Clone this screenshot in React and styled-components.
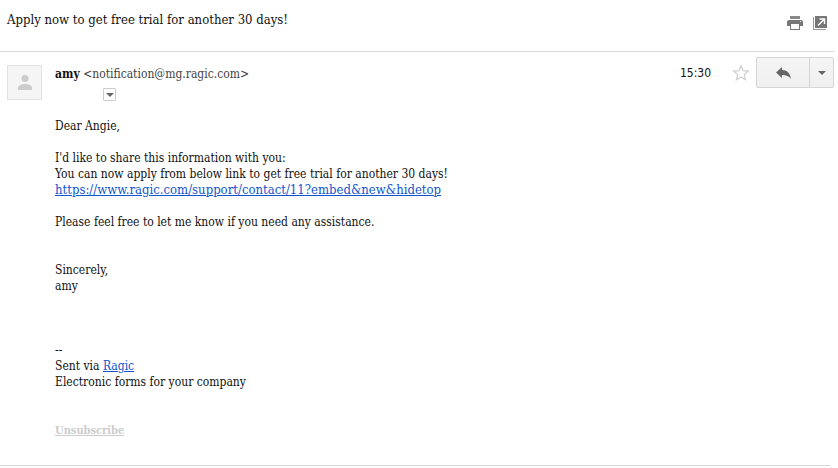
import React from "react";
import styled, { createGlobalStyle } from "styled-components";

const GlobalStyle = createGlobalStyle`
  body {
    margin: 0;
    background: #fff;
    color: #111;
    font-family: "DejaVu Serif Condensed", "DejaVu Serif", serif;
    font-size: 12px;
    line-height: 16px;
  }
`;

const Page = styled.main`
  padding-right: 4px;
`;

const SubjectBar = styled.header`
  display: flex;
  justify-content: space-between;
  align-items: flex-start;
  padding: 10px 7px 21px 7px;
  border-bottom: 1px solid #d8d8d8;
`;

const Subject = styled.h1`
  margin: 0;
  font-size: 13px;
  line-height: 20px;
  font-weight: 400;
`;

const Tools = styled.div`
  display: flex;
  gap: 10px;
  padding-top: 6px;
`;

const IconButton = styled.button`
  display: flex;
  padding: 0;
  border: 0;
  background: none;
  cursor: pointer;
`;

const Message = styled.article`
  display: flex;
  gap: 13px;
  padding: 5px 0 26px 7px;
`;

const Divider = styled.hr`
  margin: 0 4px 0 0;
  border: 0;
  border-top: 1px solid #d8d8d8;
`;

const Avatar = styled.div`
  box-sizing: border-box;
  flex: none;
  display: flex;
  align-items: center;
  justify-content: center;
  width: 35px;
  height: 35px;
  margin-top: 8px;
  border: 1px solid #e2e2e2;
  background: #f5f5f5;
`;

const Main = styled.div`
  flex: 1;
  min-width: 0;
`;

const MessageHeader = styled.div`
  display: flex;
  justify-content: space-between;
  align-items: flex-start;
`;

const Sender = styled.div`
  padding-top: 9px;
`;

const Name = styled.strong`
  font-weight: 700;
`;

const Address = styled.span`
  color: #444;
`;

const DetailsButton = styled.button`
  display: flex;
  align-items: center;
  justify-content: center;
  width: 13px;
  height: 13px;
  margin: 6px 0 0 48px;
  padding: 0;
  border: 1px solid #ccc;
  border-radius: 1px;
  box-sizing: border-box;
  background: #fff;
  cursor: pointer;
`;

const Actions = styled.div`
  display: flex;
  align-items: center;
`;

const Time = styled.time`
  margin-right: 21px;
  font-family: "DejaVu Sans Condensed", "DejaVu Sans", sans-serif;
`;

const ReplyGroup = styled.div`
  display: flex;
  margin-left: 6px;
`;

const ReplyButton = styled.button`
  box-sizing: border-box;
  display: flex;
  align-items: center;
  justify-content: center;
  width: ${props => props.$width}px;
  height: 31px;
  padding: 0;
  border: 1px solid #d6d6d6;
  border-radius: ${props => (props.$last ? "0 2px 2px 0" : "2px 0 0 2px")};
  margin-left: ${props => (props.$last ? "-1px" : "0")};
  background: linear-gradient(#f5f5f5, #f0f0f0);
  cursor: pointer;
`;

const Body = styled.div`
  padding-top: 17px;
`;

const Paragraph = styled.p`
  margin: 0 0 ${props => props.$after || 16}px;
`;

const Link = styled.a`
  color: #15c;
  font-size: ${props => (props.$large ? 13 : 12)}px;
  text-decoration: underline;
`;

const Unsubscribe = styled.a`
  color: #ccc;
  font-size: 11px;
  font-weight: 700;
  text-decoration: underline;
`;

const Caret = () => (
  <svg width="8" height="4" viewBox="0 0 8 4" aria-hidden="true">
    <path d="M0 0h8L4 4z" fill="#666" />
  </svg>
);

const PrintIcon = () => (
  <svg width="16" height="14" viewBox="0 0 16 14" aria-hidden="true">
    <path d="M3 0h10v3H3z" fill="#888" />
    <path d="M2 4h12a2 2 0 0 1 2 2v4h-3v4H3v-4H0V6a2 2 0 0 1 2-2z" fill="#777" />
    <path d="M4 8h8v5H4z" fill="#fff" />
    <path d="M13 5h1v1h-1z" fill="#ddd" />
  </svg>
);

const PopOutIcon = () => (
  <svg width="14" height="14" viewBox="0 0 14 14" aria-hidden="true">
    <path d="M0 1h1v12h12v1H0z" fill="#999" />
    <path d="M2 0h12v12H2z" fill="#777" />
    <path d="M6.500 3h5v5M11 3.500L5 9.500" fill="none" stroke="#fff" strokeWidth="1.4" />
  </svg>
);

const PersonIcon = () => (
  <svg width="14" height="15" viewBox="0 0 14 15" aria-hidden="true">
    <circle cx="7" cy="3.5" r="3.5" fill="#ccc" />
    <path d="M0 15v-2c0-3 4-4 7-4s7 1 7 4v2z" fill="#ccc" />
  </svg>
);

const StarIcon = () => (
  <svg width="18" height="17" viewBox="0 0 18 17" aria-hidden="true">
    <path
      d="M9 1.8l2 4.9 5.3.4-4 3.5 1.2 5.1L9 13l-4.5 2.7 1.2-5.1-4-3.5L7 6.7z"
      fill="#fff"
      stroke="#d0d0d0"
      strokeWidth="1.3"
    />
  </svg>
);

const ReplyIcon = () => (
  <svg width="15" height="12" viewBox="0 0 15 12" aria-hidden="true">
    <path d="M6 0v3c5 0 8 3 9 9-2-3-5-4-9-4v3L0 5.500z" fill="#666" />
  </svg>
);

const App = () => (
  <>
    <GlobalStyle />
    <Page>
      <SubjectBar>
        <Subject>Apply now to get free trial for another 30 days!</Subject>
        <Tools>
          <IconButton type="button" aria-label="Print">
            <PrintIcon />
          </IconButton>
          <IconButton type="button" aria-label="Open in new window">
            <PopOutIcon />
          </IconButton>
        </Tools>
      </SubjectBar>

      <Message>
        <Avatar>
          <PersonIcon />
        </Avatar>
        <Main>
          <MessageHeader>
            <Sender>
              <Name>amy</Name> <Address>&lt;notification@mg.ragic.com&gt;</Address>
              <DetailsButton type="button" aria-label="Show details">
                <Caret />
              </DetailsButton>
            </Sender>
            <Actions>
              <Time>15:30</Time>
              <IconButton type="button" aria-label="Star">
                <StarIcon />
              </IconButton>
              <ReplyGroup>
                <ReplyButton type="button" aria-label="Reply" $width={54}>
                  <ReplyIcon />
                </ReplyButton>
                <ReplyButton type="button" aria-label="More" $width={25} $last>
                  <Caret />
                </ReplyButton>
              </ReplyGroup>
            </Actions>
          </MessageHeader>

          <Body>
            <Paragraph>Dear Angie,</Paragraph>
            <Paragraph>
              I'd like to share this information with you:
              <br />
              You can now apply from below link to get free trial for another 30 days!
              <br />
              <Link $large href="https://www.ragic.com/support/contact/11?embed&new&hidetop">
                https://www.ragic.com/support/contact/11?embed&amp;new&amp;hidetop
              </Link>
            </Paragraph>
            <Paragraph $after={32}>
              Please feel free to let me know if you need any assistance.
            </Paragraph>
            <Paragraph $after={48}>
              Sincerely,
              <br />
              amy
            </Paragraph>
            <Paragraph $after={32}>
              --
              <br />
              Sent via <Link href="https://www.ragic.com">Ragic</Link>
              <br />
              Electronic forms for your company
            </Paragraph>
            <Unsubscribe href="#unsubscribe">Unsubscribe</Unsubscribe>
          </Body>
        </Main>
      </Message>
      <Divider />
    </Page>
  </>
);

export default App;
